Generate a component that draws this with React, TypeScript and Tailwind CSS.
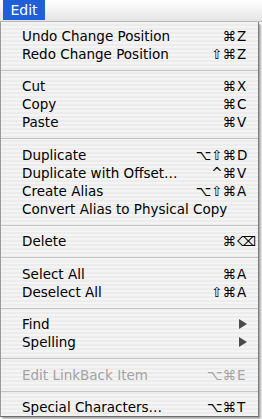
import React from "react";

type Item =
  | { type: "sep"; h: number }
  | { type: "item"; label: string; mods?: string; key?: string; disabled?: boolean; submenu?: boolean };

const items: Item[] = [
  { type: "item", label: "Undo Change Position", mods: "⌘", key: "Z" },
  { type: "item", label: "Redo Change Position", mods: "⇧⌘", key: "Z" },
  { type: "sep", h: 14 },
  { type: "item", label: "Cut", mods: "⌘", key: "X" },
  { type: "item", label: "Copy", mods: "⌘", key: "C" },
  { type: "item", label: "Paste", mods: "⌘", key: "V" },
  { type: "sep", h: 15 },
  { type: "item", label: "Duplicate", mods: "⌥⇧⌘", key: "D" },
  { type: "item", label: "Duplicate with Offset…", mods: "^⌘", key: "V" },
  { type: "item", label: "Create Alias", mods: "⌥⇧⌘", key: "A" },
  { type: "item", label: "Convert Alias to Physical Copy" },
  { type: "sep", h: 14 },
  { type: "item", label: "Delete", mods: "⌘", key: "⌫" },
  { type: "sep", h: 15 },
  { type: "item", label: "Select All", mods: "⌘", key: "A" },
  { type: "item", label: "Deselect All", mods: "⇧⌘", key: "A" },
  { type: "sep", h: 14 },
  { type: "item", label: "Find", submenu: true },
  { type: "item", label: "Spelling", submenu: true },
  { type: "sep", h: 15 },
  { type: "item", label: "Edit LinkBack Item", mods: "⌥⌘", key: "E", disabled: true },
  { type: "sep", h: 14 },
  { type: "item", label: "Special Characters…", mods: "⌥⌘", key: "T" },
];

export default function App() {
  return (
    <div
      className="w-[262px] h-[419px] bg-white relative overflow-hidden text-black"
      style={{ fontFamily: '"DejaVu Sans", "Liberation Sans", sans-serif' }}
    >
      {/* menu bar */}
      <div className="h-[22px] bg-[linear-gradient(to_bottom,#ffffff,#f2f2f2_50%,#e4e4e4)] border-b border-[#b8b8b8] flex items-start">
        <div className="ml-[3px] w-[42px] h-[20px] bg-[#1f5fd8] text-white text-[14px] leading-[20px] flex items-center justify-center">
          Edit
        </div>
      </div>
      {/* menu panel */}
      <div className="w-[259px] pt-[5px] pb-[0px] border-l border-[#9a9a9a] border-r border-r-[#7a7a7a] border-b border-b-[#6a6a6a] shadow-[2px_2px_2px_rgba(0,0,0,0.35)] bg-[repeating-linear-gradient(to_bottom,#f4f4f4_0px,#f4f4f4_2px,#ececec_2px,#ececec_4px)]">
        {items.map((it, i) =>
          it.type === "sep" ? (
            <div key={i} className={`${it.h === 14 ? "h-[14px]" : "h-[15px]"} flex items-center`}>
              <div className="w-full h-px bg-[#c4c4c4]" />
            </div>
          ) : (
            <div
              key={i}
              className={`h-[18px] flex items-center pl-[21px] text-[13.5px] leading-[18px] ${
                it.disabled ? "text-[#a3a3a3]" : "text-black"
              }`}
            >
              <span className="flex-1 whitespace-nowrap">{it.label}</span>
              {it.submenu ? (
                <span className="w-[22px] flex items-center">
                  <svg width="8" height="10" viewBox="0 0 8 10" className="ml-[3px]">
                    <path d="M0 0 L8 5 L0 10 Z" fill={"#4a4a4a"} />
                  </svg>
                </span>
              ) : it.mods ? (
                <span className="flex items-center whitespace-nowrap">
                  <span className="text-right">{it.mods}</span>
                  <span className="w-[22px] text-left pl-[1px]">{it.key}</span>
                </span>
              ) : null}
            </div>
          )
        )}
      </div>
    </div>
  );
}
